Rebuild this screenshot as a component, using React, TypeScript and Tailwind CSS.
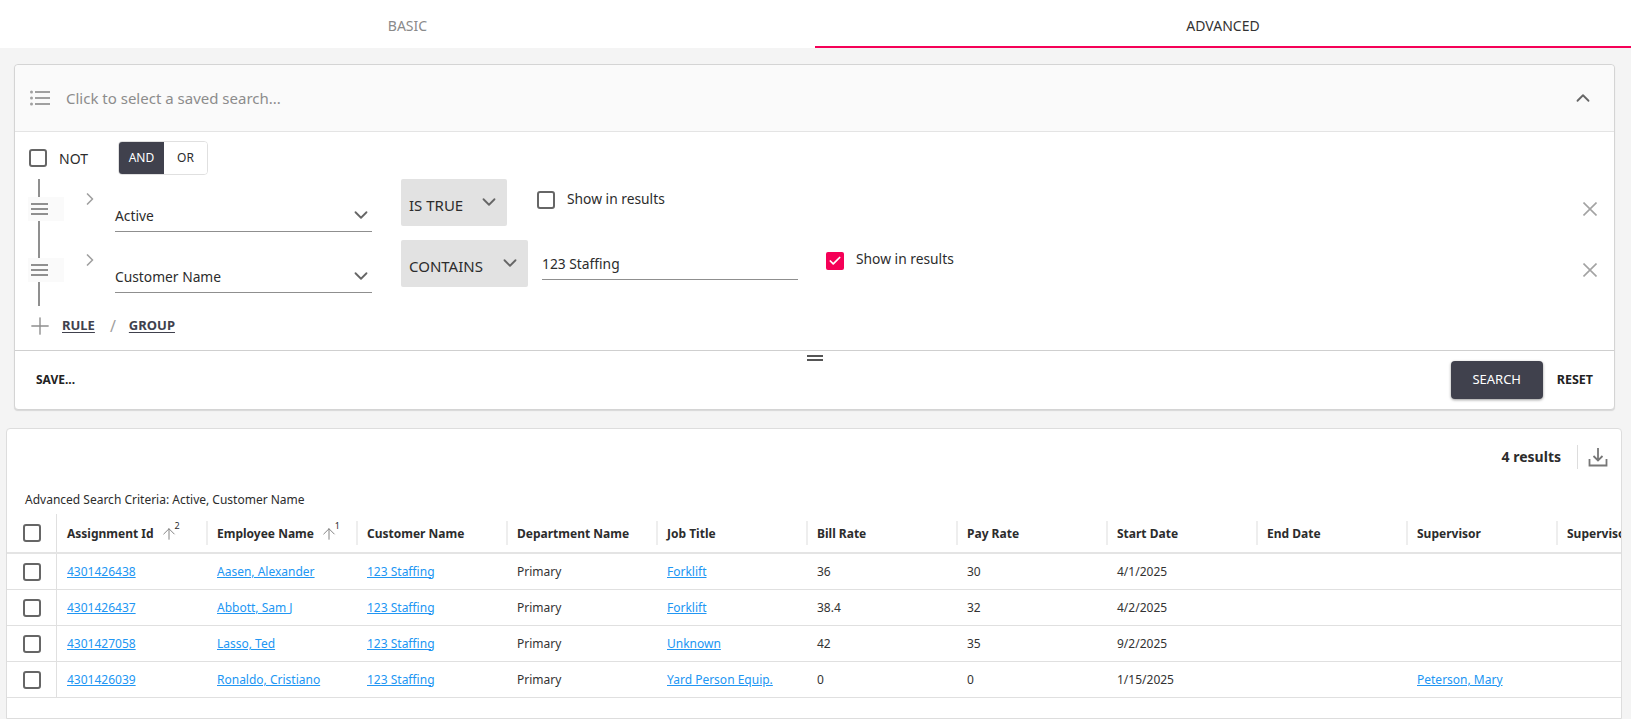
import { ArrowUp, ChevronDown, ChevronRight, ChevronUp, Check, Plus } from 'lucide-react';

const columns = [
  'Assignment Id',
  'Employee Name',
  'Customer Name',
  'Department Name',
  'Job Title',
  'Bill Rate',
  'Pay Rate',
  'Start Date',
  'End Date',
  'Supervisor',
  'Supervisor',
];

const rows = [
  { id: '4301426438', name: 'Aasen, Alexander', job: 'Forklift', bill: '36', pay: '30', start: '4/1/2025', supervisor: '' },
  { id: '4301426437', name: 'Abbott, Sam J', job: 'Forklift', bill: '38.4', pay: '32', start: '4/2/2025', supervisor: '' },
  { id: '4301427058', name: 'Lasso, Ted', job: 'Unknown', bill: '42', pay: '35', start: '9/2/2025', supervisor: '' },
  { id: '4301426039', name: 'Ronaldo, Cristiano', job: 'Yard Person Equip.', bill: '0', pay: '0', start: '1/15/2025', supervisor: 'Peterson, Mary' },
];

function Box({ checked = false }: { checked?: boolean }) {
  if (checked) {
    return (
      <div className="flex h-[18px] w-[18px] shrink-0 items-center justify-center rounded-[2px] bg-[#f50057]">
        <Check size={14} strokeWidth={3} className="text-white" />
      </div>
    );
  }
  return <div className="h-[18px] w-[18px] shrink-0 rounded-[3px] border-2 border-[#666666] bg-white" />;
}

function Handle({ tail }: { tail: string }) {
  return (
    <div className="ml-[13px] flex w-[36px] shrink-0 flex-col">
      <div className="ml-[10px] h-[18px] w-[2px] bg-[#8f8f8f]" />
      <div className="flex h-[24px] flex-col gap-[3px] bg-[#fafafa] pl-[3px] pt-[6px]">
        <div className="h-[2px] w-[17px] bg-[#8f8f8f]" />
        <div className="h-[2px] w-[17px] bg-[#8f8f8f]" />
        <div className="h-[2px] w-[17px] bg-[#8f8f8f]" />
      </div>
      <div className={tail} />
    </div>
  );
}

function RuleRow({ field, op, opWidth, value, checked, height }: { field: string; op: string; opWidth: string; value?: string; checked: boolean; height: string }) {
  return (
    <div className={`flex items-start ${height}`}>
      <Handle tail={value ? 'ml-[10px] h-[24px] w-[2px] bg-[#8f8f8f]' : 'ml-[10px] h-[19px] w-[2px] bg-[#8f8f8f]'} />
      <ChevronRight size={20} strokeWidth={2} className="ml-[16px] mt-[10px] shrink-0 text-[#a0a0a0]" />
      <div className="ml-[15px] mt-[26px] flex h-[27px] w-[257px] shrink-0 items-center justify-between border-b border-[#8f8f8f] pb-[3px] text-[13.8px] text-[#2c2c2c]">
        <span>{field}</span>
        <ChevronDown size={22} strokeWidth={2} className="-mt-[4px] text-[#666666]" />
      </div>
      <div className={`ml-[29px] flex h-[47px] shrink-0 items-start justify-between rounded-[2px] bg-[#e2e2e2] pl-[8px] pr-[7px] text-[15px] text-[#2c2c2c] ${opWidth}`}>
        <span className="mt-[15px]">{op}</span>
        <ChevronDown size={22} strokeWidth={2} className="mt-[12px] text-[#666666]" />
      </div>
      {value && (
        <div className="ml-[14px] mt-[13px] flex h-[27px] w-[256px] shrink-0 items-center border-b border-[#8f8f8f] pb-[3px] text-[13.8px] text-[#2c2c2c]">
          {value}
        </div>
      )}
      <div className={`mt-[12px] flex items-center gap-[12px] text-[13.8px] text-[#2c2c2c] ${value ? 'ml-[28px]' : 'ml-[30px]'}`}>
        <Box checked={checked} />
        <span className={value ? '-mt-[4px]' : '-mt-[2px]'}>Show in results</span>
      </div>
      <svg width="14" height="14" viewBox="0 0 14 14" stroke="#a3a3a3" strokeWidth="1.6" className="ml-auto mr-[17px] mt-[23px] shrink-0">
        <path d="M0.5 0.5l13 13M13.5 0.5l-13 13" />
      </svg>
    </div>
  );
}

function Panel() {
  return (
    <div className="ml-[14px] mr-[16px] flex h-[346px] flex-col rounded-[4px] border border-[#d4d4d4] bg-white shadow-[0_1px_1px_rgba(0,0,0,0.12)]">
      <div className="flex h-[67px] shrink-0 items-center rounded-t-[4px] border-b border-[#e4e4e4] bg-[#fafafa] pl-[14px] pr-[20px]">
        <svg width="20" height="16" viewBox="0 0 20 16" className="ml-[1px] shrink-0 text-[#a0a0a0]">
          <g fill="currentColor">
            <circle cx="1.5" cy="2" r="1.5" />
            <circle cx="1.5" cy="8" r="1.5" />
            <circle cx="1.5" cy="14" r="1.5" />
            <rect x="5" y="1" width="15" height="2" />
            <rect x="5" y="7" width="15" height="2" />
            <rect x="5" y="13" width="15" height="2" />
          </g>
        </svg>
        <span className="ml-[16px] text-[15px] text-[#8c8c8c]">Click to select a saved search...</span>
        <ChevronUp size={22} strokeWidth={2} className="ml-auto text-[#666666]" />
      </div>

      <div className="h-[218px] shrink-0 pt-[9px]">
        <div className="flex h-[34px] items-center pl-[14px] text-[14px] text-[#2c2c2c]">
          <Box />
          <span className="ml-[12px]">NOT</span>
          <div className="ml-[30px] flex h-[34px] w-[90px] overflow-hidden rounded-[4px] border border-[#e0e0e0] text-[12px]">
            <div className="flex w-[45px] items-center justify-center bg-[#40414d] text-white">AND</div>
            <div className="flex flex-1 items-center justify-center bg-white">OR</div>
          </div>
        </div>
        <div className="mt-[4px]">
          <RuleRow field="Active" op="IS TRUE" opWidth="w-[106px]" checked={false} height="h-[61px]" />
          <RuleRow field="Customer Name" op="CONTAINS" opWidth="w-[127px]" value="123 Staffing" checked height="h-[66px]" />
        </div>
        <div className="mt-[8px] flex h-[24px] items-center pl-[11px] text-[13px] font-bold text-[#40414d]">
          <Plus size={28} strokeWidth={1.2} className="text-[#8f8f8f]" />
          <span className="ml-[8px] underline underline-offset-2">RULE</span>
          <span className="ml-[15px] text-[16px] font-normal text-[#a0a0a0]">/</span>
          <span className="ml-[13px] underline underline-offset-2">GROUP</span>
        </div>
      </div>

      <div className="relative flex flex-1 items-center border-t border-[#cfcfcf] pl-[21px] pr-[21px] text-[12.5px] font-bold text-[#222222]">
        <div className="absolute left-[792px] top-[4px] flex flex-col gap-[2px]">
          <div className="h-[2px] w-[16px] bg-[#555555]" />
          <div className="h-[2px] w-[16px] bg-[#555555]" />
        </div>
        <span className="text-[12px]">SAVE...</span>
        <div className="ml-auto flex h-[38px] w-[92px] items-center justify-center rounded-[4px] bg-[#40414d] text-[13px] font-normal text-white shadow-[0_1px_3px_rgba(0,0,0,0.4)]">
          SEARCH
        </div>
        <span className="ml-[14px]">RESET</span>
      </div>
    </div>
  );
}

function Results() {
  return (
    <div className="ml-[6px] mr-[9px] mt-[18px] flex h-[291px] flex-col overflow-hidden rounded-t-[4px] border border-[#dddddd] bg-white">
      <div className="flex h-[55px] shrink-0 items-center justify-end pr-[13px]">
        <span className="text-[14px] font-bold text-[#2c2c2c]">4 results</span>
        <div className="ml-[16px] h-[24px] w-px bg-[#dddddd]" />
        <svg width="20" height="20" viewBox="0 0 20 20" fill="none" stroke="#777777" strokeWidth="1.8" className="ml-[10px]">
          <path d="M1.5 12v6.5h17V12" />
          <path d="M10 1v12M5.5 9l4.5 4.5L14.5 9" />
        </svg>
      </div>
      <div className="h-[30px] shrink-0 pl-[18px] pt-[7px] text-[12px] leading-[18px] text-[#2c2c2c]">
        Advanced Search Criteria: Active, Customer Name
      </div>

      <div className="flex h-[40px] shrink-0 border-b-2 border-[#e4e4e4]">
        <div className="flex w-[50px] shrink-0 items-center border-r border-[#e0e0e0] pl-[16px]">
          <Box />
        </div>
        {columns.map((col, i) => (
          <div key={i} className="relative flex w-[150px] shrink-0 items-center whitespace-nowrap pl-[10px] pt-[1px] text-[12px] font-bold text-[#2c2c2c]">
            <span>{col}</span>
            {i === 0 && <SortMark order="2" />}
            {i === 1 && <SortMark order="1" />}
            <div className="absolute -right-px top-[7px] h-[24px] w-[2px] bg-[#eeeeee]" />
          </div>
        ))}
      </div>

      {rows.map(row => (
        <div key={row.id} className="flex h-[36px] shrink-0 border-b border-[#e0e0e0] text-[12px] text-[#333333]">
          <div className="flex w-[50px] shrink-0 items-center border-r border-[#e0e0e0] pl-[16px]">
            <Box />
          </div>
          <Cell link>{row.id}</Cell>
          <Cell link>{row.name}</Cell>
          <Cell link>123 Staffing</Cell>
          <Cell>Primary</Cell>
          <Cell link>{row.job}</Cell>
          <Cell>{row.bill}</Cell>
          <Cell>{row.pay}</Cell>
          <Cell>{row.start}</Cell>
          <Cell />
          <Cell link>{row.supervisor}</Cell>
          <Cell />
        </div>
      ))}
    </div>
  );
}

function SortMark({ order }: { order: string }) {
  return (
    <div className="relative ml-[6px] flex items-center">
      <ArrowUp size={18} strokeWidth={1.2} className="text-[#777777]" />
      <span className="absolute -right-[2px] -top-[4px] text-[9px] font-normal leading-none">{order}</span>
    </div>
  );
}

function Cell({ link = false, children }: { link?: boolean; children?: React.ReactNode }) {
  return (
    <div className="flex w-[150px] shrink-0 items-center pl-[10px]">
      {link && children ? <a className="text-[#2196f3] underline">{children}</a> : children}
    </div>
  );
}

export default function App() {
  return (
    <div className="h-[719px] overflow-hidden bg-[#f4f4f4] font-['Noto_Sans',sans-serif]">
      <div className="flex h-[48px] bg-white text-[14px]">
        <div className="flex w-[815px] items-center justify-center pt-[2px] text-[#8a8a8a]">BASIC</div>
        <div className="flex flex-1 items-center justify-center border-b-2 border-[#f50057] pt-[4px] text-[#333333]">ADVANCED</div>
      </div>
      <div className="pt-[16px]">
        <Panel />
        <Results />
      </div>
    </div>
  );
}
